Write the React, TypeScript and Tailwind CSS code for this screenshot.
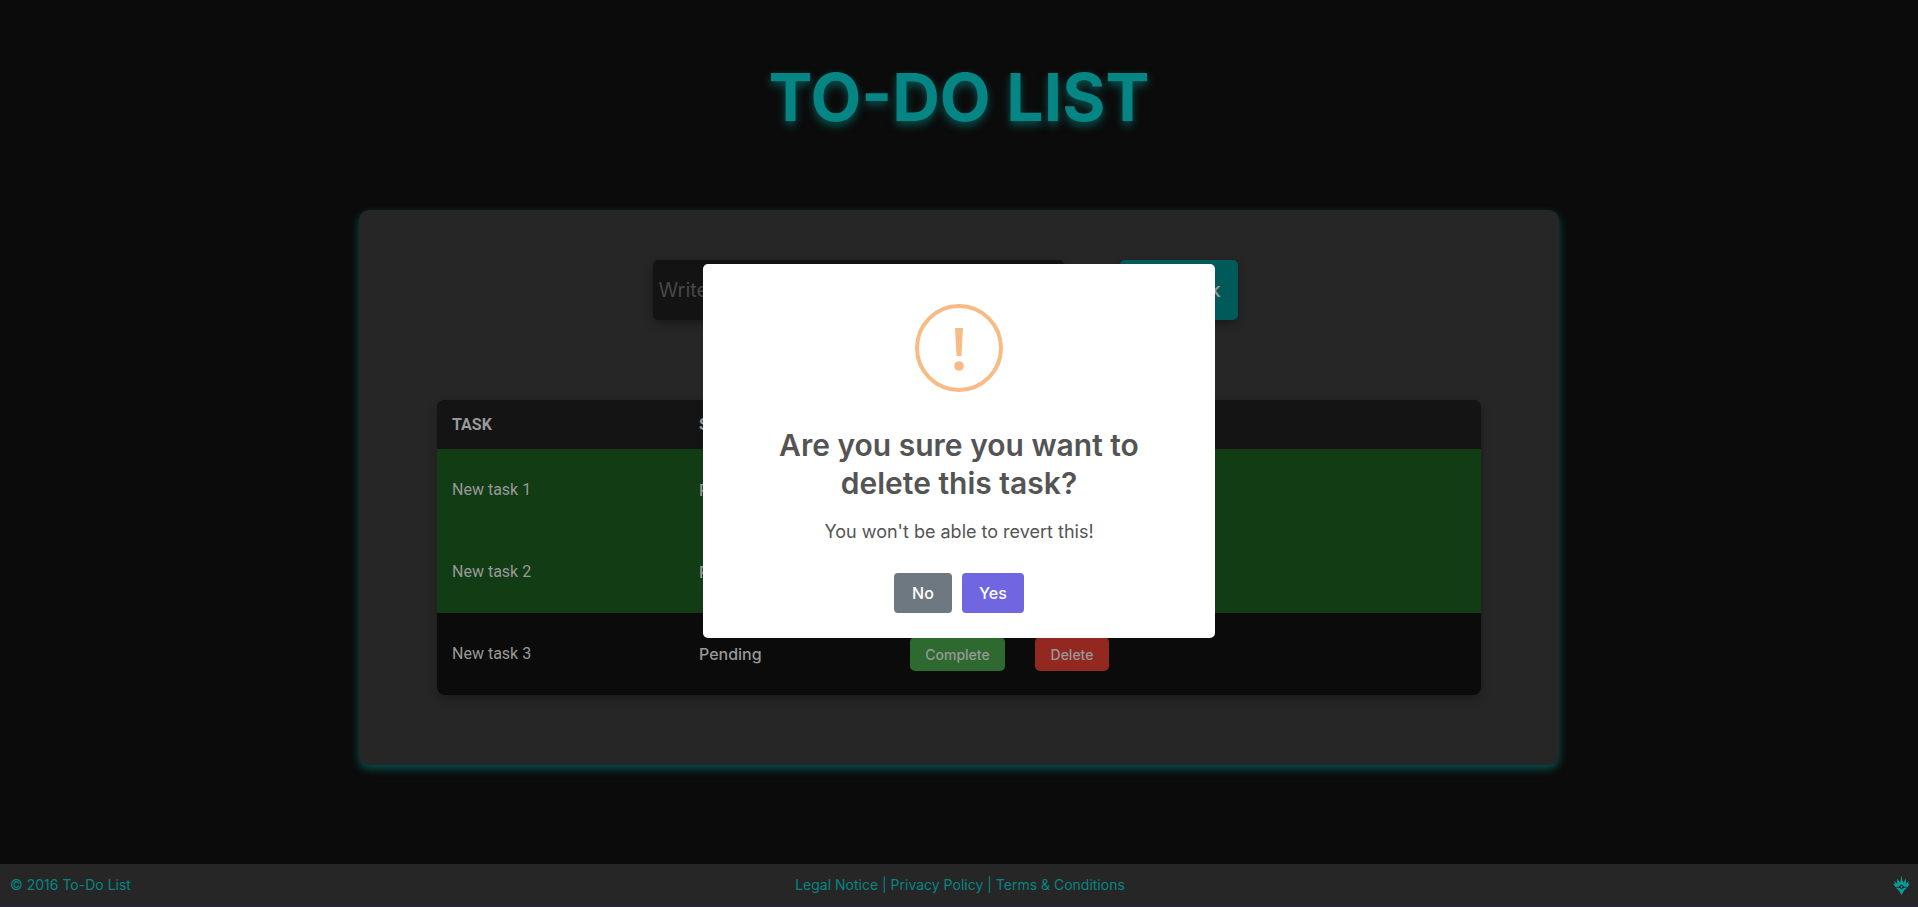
const rows = [
  { name: "New task 1", status: "Pending", done: true },
  { name: "New task 2", status: "Pending", done: true },
  { name: "New task 3", status: "Pending", done: false },
];

function TaskForm() {
  return (
    <form className="mr-7 flex justify-center gap-14 text-[20px]" onSubmit={(e) => e.preventDefault()}>
      <input
        aria-label="New task"
        placeholder="Write a new task"
        className="h-[60px] w-[411px] rounded-[5px] bg-[#131313] px-1.5 text-[#999] shadow-[0_4px_8px_rgba(0,0,0,0.3)] outline-none placeholder:text-[#474747]"
      />
      <button className="h-[60px] w-[118px] rounded-[5px] bg-[#005a59] font-medium text-[#999] shadow-[0_4px_8px_rgba(0,0,0,0.3)]">
        Add task
      </button>
    </form>
  );
}

function TaskTable() {
  return (
    <div className="mx-auto mt-20 w-[87%] overflow-hidden rounded-lg shadow-[0_4px_8px_rgba(0,0,0,0.25)]">
      <table className="w-full table-fixed border-collapse bg-[#0b0b0b] text-left font-[Roboto,sans-serif] text-base text-[#999]">
        <colgroup>
          <col className="w-[247px]" />
          <col className="w-[211px]" />
          <col />
        </colgroup>
        <thead>
          <tr className="h-[49px] bg-[#141414]">
            <th className="px-[15px] font-bold">TASK</th>
            <th className="px-[15px] font-bold">STATUS</th>
            <th className="px-[15px] font-bold">ACTIONS</th>
          </tr>
        </thead>
        <tbody>
          {rows.map((row) => (
            <tr key={row.name} className={row.done ? "h-[82px] bg-[#123c14]" : "h-[82px]"}>
              <td className="px-[15px]">{row.name}</td>
              <td className="px-[15px] font-[Inter,sans-serif] font-medium">{row.status}</td>
              <td className="px-[15px] font-[Inter,sans-serif] text-[14px] font-medium">
                <div className="flex gap-[30px]">
                  <button className="h-[34px] w-[95px] rounded-[5px] bg-[#2e6a30]">Complete</button>
                  <button className="h-[34px] w-[74px] rounded-[5px] bg-[#932820]">Delete</button>
                </div>
              </td>
            </tr>
          ))}
        </tbody>
      </table>
    </div>
  );
}

function ConfirmDialog() {
  return (
    <div className="fixed inset-0 flex items-center justify-center pb-1.5">
      <div
        role="dialog"
        aria-labelledby="confirm-title"
        className="flex w-lg flex-col items-center rounded-[5px] bg-white pt-10 pb-[25px] text-[#545454]"
      >
        <svg viewBox="0 0 88 88" className="size-[88px]" fill="#f8bb86" aria-hidden="true">
          <circle cx="44" cy="44" r="42" fill="none" stroke="#f8bb86" strokeWidth="4" />
          <path d="M40 24h8l-1.6 28h-4.8z" />
          <circle cx="44" cy="62" r="4.8" />
        </svg>
        <h2 id="confirm-title" className="mt-[34px] w-[400px] text-center text-[30px] leading-[38px] font-semibold">
          Are you sure you want to delete this task?
        </h2>
        <p className="mt-[18px] text-[18px] leading-6">You won't be able to revert this!</p>
        <div className="mt-[29px] flex gap-2.5 text-base font-medium text-white">
          <button className="h-10 w-[58px] rounded-sm bg-[#6e7881]">No</button>
          <button className="h-10 w-[62px] rounded-sm bg-[#7066e0]">Yes</button>
        </div>
      </div>
    </div>
  );
}

function Footer() {
  return (
    <footer className="grid h-[43px] grid-cols-3 items-center border-b-2 border-[#26273c] bg-[#262626] pr-2 pl-2.5 text-[14px] text-[#058583]">
      <span>© 2016 To-Do List</span>
      <nav className="text-center">
        <a href="#legal">Legal Notice</a> | <a href="#privacy">Privacy Policy</a> | <a href="#terms">Terms &amp; Conditions</a>
      </nav>
      <svg viewBox="0 0 17 20" className="h-5 w-[17px] justify-self-end" fill="#0b9896" aria-hidden="true">
        <path d="M8.500 0l1 6 .8 1.500L12.800 3.500l.2 5L16 6l-1 3 2-.3-2.500 3.300-3-.2L8.500 9.500l-3 2.300-3 .2L0 8.700l2 .3-1-3 3 2.500.2-5 2.500 4 .8-1.500z" />
        <path d="M8.500 10.500l1.200 1.300-1.200 1.200-1.200-1.200z" />
        <path d="M2.500 12.500l3.500.3 2.500 1.400 2.500-1.400 3.500-.3-3.500 3.200-2.500 4.300-2.500-4.300z" />
      </svg>
    </footer>
  );
}

export default function App() {
  return (
    <div className="flex min-h-screen flex-col bg-[#0b0b0b] font-[Inter,sans-serif]">
      <h1 className="mt-[57px] text-center text-[66px] leading-20 font-bold text-[#058583] [text-shadow:0_4px_8px_rgba(5,133,131,0.6)]">
        TO-DO LIST
      </h1>
      <main className="mx-auto mt-[73px] w-full max-w-[1200px] grow">
        <section className="rounded-[10px] bg-[#262626] pt-[50px] pb-[70px] shadow-[0_4px_8px_rgba(0,128,126,0.6)]">
          <TaskForm />
          <TaskTable />
        </section>
      </main>
      <Footer />
      <ConfirmDialog />
    </div>
  );
}
